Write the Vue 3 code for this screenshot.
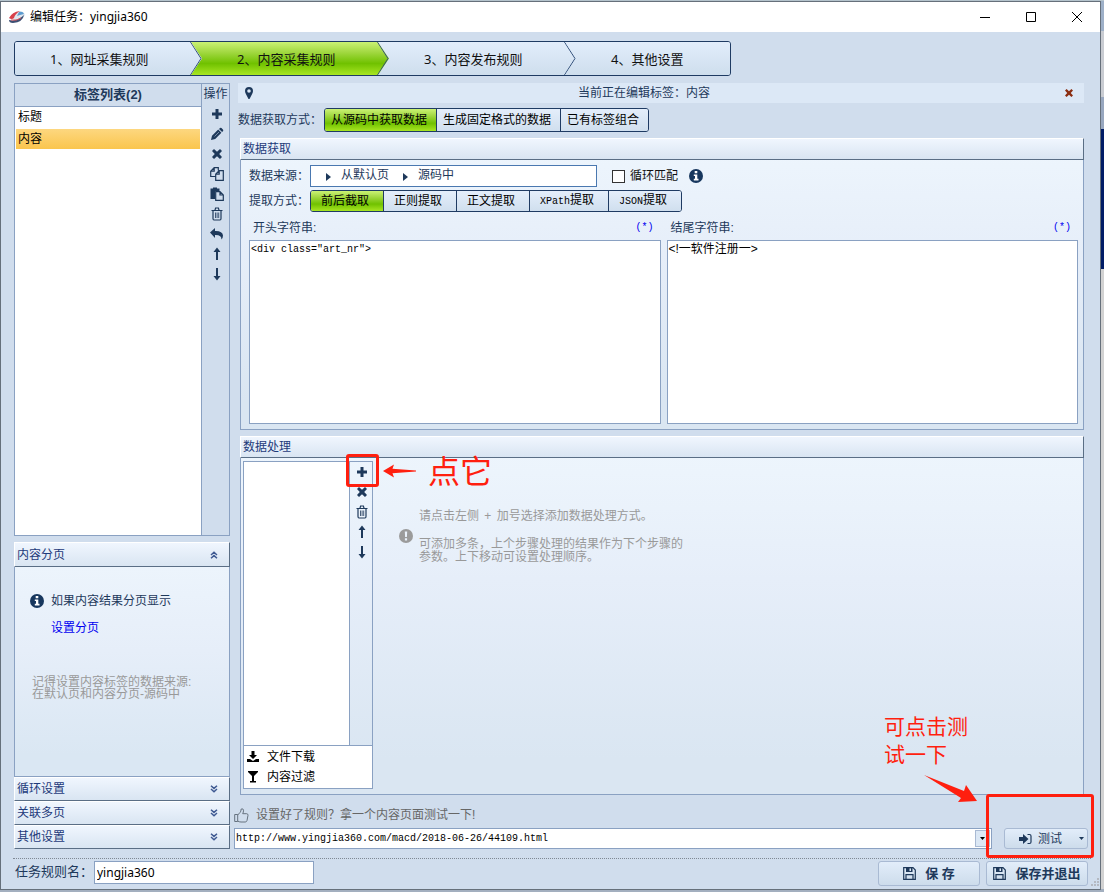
<script setup>
import { ref } from 'vue'

const steps = ['1、网址采集规则', '2、内容采集规则', '3、内容发布规则', '4、其他设置']
const activeStep = ref(1)
const tags = ['标题', '内容']
const activeTag = ref(1)
const sources = ['从源码中获取数据', '生成固定格式的数据', '已有标签组合']
const activeSource = ref(0)
const methods = [
  { latin: '', text: '前后截取' },
  { latin: '', text: '正则提取' },
  { latin: '', text: '正文提取' },
  { latin: 'XPath', text: '提取' },
  { latin: 'JSON', text: '提取' },
]
const activeMethod = ref(0)
const sections = ['循环设置', '关联多页', '其他设置']

const icons = {
  plus: { fill: 'M5.5 2h3v3.5H12v3H8.5V12h-3V8.5H2v-3h3.5z' },
  pencil: { fill: 'M1 13l1-4.200L8.200 2.600l3.200 3.200L5.200 12zM9 1.900l1-1q.8-.5 1.500.2l1.400 1.400q.7.8.2 1.500l-1 1z', line: 'M4.500 9.500l4.500-4.500' },
  close: { fill: 'M2 4l2-2 3 2.8L10 2l2 2-2.8 3L12 10l-2 2-3-2.8L4 12l-2-2 2.800-3z' },
  copy: { stroke: 'M5.500 9.500H.7V4.200L4.200.7h4.100v2.800M4.200.7v3.500H.7M5.700 7.200L9.200 3.700h4.100v9.600H5.700zM9.200 3.700v3.500H5.700' },
  paste: { fill: 'M.5 1.500H3V.5h4v1h2.500v2.500H5V12H.5z', stroke: 'M5.700 4.700H10l3.300 3.300v5.300H5.700zM10 4.700V8h3.300' },
  trash: { stroke: 'M1.500 3.500h11M5 3.200L5.600 1h2.800L9 3.200M3 3.500v8q0 1.500 1 1.500h6q1 0 1-1.500v-8', thin: 'M5.500 5.500v5.500M7.100 5.500v5.500M8.700 5.500v5.500' },
  undo: { fill: 'M0 5.500L5 1v3q7.500-.3 8 4.500 0 2.500-1.600 4 .4-4.800-6.400-4.500v3z' },
  up: { fill: 'M7 .5l3.500 4.500H8v8H6V5H3.500z' },
  down: { fill: 'M7 13.500L3.500 9H6V1h2v8h2.500z' },
}
const tagTools = [
  ['plus', '添加'], ['pencil', '编辑'], ['close', '删除'], ['copy', '复制'], ['paste', '粘贴'],
  ['trash', '清空'], ['undo', '撤销'], ['up', '上移'], ['down', '下移'],
]
const stepTools = [['plus', '添加'], ['close', '删除'], ['trash', '清空'], ['up', '上移'], ['down', '下移']]

const loop = ref(false)
const startText = ref('<div class="art_nr">')
const endText = ref('<!一软件注册一>')
const url = ref('http://www.yingjia360.com/macd/2018-06-26/44109.html')
const taskName = ref('yingjia360')
</script>

<template>
  <div class="desktop">
    <div class="window">
      <header class="titlebar">
        <svg class="logo" width="18" height="14" viewBox="0 0 18 14">
          <path d="M1 9Q4 3 11 1q5 0 6 4-2 4-8 5z" fill="#dfe6ee" />
          <path d="M1 8Q4 2 12 1 7 4 6 8q-2 2-5 0z" fill="#d8404a" />
          <path d="M11 2q4-1 5 2l-4 1-3 1z" fill="#5b9bd0" />
          <path d="M1 10q8 2 15-5-1 7-11 8-4 0-4-3z" fill="#3d4f73" />
          <path d="M3 10q6 1 10-2" stroke="#e2525a" fill="none" />
        </svg>
        <h1>编辑任务：yingjia360</h1>
        <div class="win-controls">
          <button aria-label="最小化"><svg width="12" height="12"><path d="M1 6.500h10" /></svg></button>
          <button aria-label="最大化"><svg width="12" height="12"><path d="M1.500 1.500h9v9h-9z" /></svg></button>
          <button aria-label="关闭"><svg width="12" height="12"><path d="M1 1l10 10M11 1L1 11" /></svg></button>
        </div>
      </header>

      <nav class="steps">
        <button v-for="(s, i) in steps" :key="s" class="step" :class="{ on: i === activeStep }" @click="activeStep = i">
          {{ s }}
          <svg v-if="i < 3" class="chevron" width="12" height="33" viewBox="0 0 12 33"><path d="M.5 0L11 16.500 .5 33" /></svg>
        </button>
      </nav>

      <div class="body">
        <aside class="side">
          <section class="tag-panel">
            <div class="tag-list">
              <h2>标签列表(2)</h2>
              <ul>
                <li v-for="(t, i) in tags" :key="t">
                  <button :class="{ on: i === activeTag }" @click="activeTag = i">{{ t }}</button>
                </li>
              </ul>
            </div>
            <div class="tools">
              <span>操作</span>
              <button v-for="[name, label] in tagTools" :key="name" :aria-label="label">
                <svg width="14" height="14" viewBox="0 0 14 14">
                  <path v-if="icons[name].fill" :d="icons[name].fill" class="f" />
                  <path v-if="icons[name].stroke" :d="icons[name].stroke" class="s" />
                  <path v-if="icons[name].thin" :d="icons[name].thin" class="t" />
                  <path v-if="icons[name].line" :d="icons[name].line" class="l" />
                </svg>
              </button>
            </div>
          </section>

          <section class="paging">
            <button class="head">内容分页
              <svg width="8" height="8" viewBox="0 0 8 8"><path d="M1 4L4 1.300 7 4M1 7.300L4 4.600l3 2.700" /></svg>
            </button>
            <div class="paging-body">
              <p class="info-line">
                <svg class="info" width="14" height="14" viewBox="0 0 14 14"><circle cx="7" cy="7" r="7" /><path d="M5.700 2h2.600v2.200H5.700zM4.800 5.500h3.500v4.300h1.200v1.700H4.800V9.800H6V7H4.800z" /></svg>
                如果内容结果分页显示
              </p>
              <a href="#">设置分页</a>
              <p class="note">记得设置内容标签的数据来源:<br>在默认页和内容分页-源码中</p>
            </div>
          </section>
          <button v-for="s in sections" :key="s" class="head small">{{ s }}
            <svg width="8" height="8" viewBox="0 0 8 8"><path d="M1 .700l3 2.700L7 .700M1 4l3 2.700L7 4" /></svg>
          </button>
        </aside>

        <main class="main">
          <div class="editing">
            <svg width="8" height="12" viewBox="0 0 8 12"><path fill-rule="evenodd" d="M4 0q4 .2 4 4 0 1.500-1 3.200L4.500 12h-1L1 7.200Q0 5.500 0 4 0 .2 4 0zM4 2.200a1.800 1.800 0 100 3.600 1.800 1.800 0 000-3.600z" fill="#1e395b" /></svg>
            <span>当前正在编辑标签：内容</span>
            <button aria-label="关闭编辑"><svg width="8" height="8" viewBox="2 2 10 10"><path :d="icons.close.fill" fill="#8b2e12" /></svg></button>
          </div>

          <div class="source-row">
            <span>数据获取方式：</span>
            <div class="seg">
              <button v-for="(s, i) in sources" :key="s" :class="{ on: i === activeSource }" @click="activeSource = i">{{ s }}</button>
            </div>
          </div>

          <section class="group">
            <h3>数据获取</h3>
            <div class="acquire">
              <div class="row">
                <span>数据来源：</span>
                <div class="crumbs">
                  <svg width="5" height="8"><path d="M0 0l5 4-5 4z" /></svg><span>从默认页</span>
                  <svg width="5" height="8"><path d="M0 0l5 4-5 4z" /></svg><span>源码中</span>
                </div>
                <label class="check"><input v-model="loop" type="checkbox">循环匹配</label>
                <svg class="info" width="14" height="14" viewBox="0 0 14 14"><circle cx="7" cy="7" r="7" /><path d="M5.700 2h2.600v2.200H5.700zM4.800 5.500h3.500v4.300h1.200v1.700H4.800V9.800H6V7H4.800z" /></svg>
              </div>
              <div class="row method-row">
                <span>提取方式：</span>
                <div class="seg methods">
                  <button v-for="(m, i) in methods" :key="i" :class="{ on: i === activeMethod }" @click="activeMethod = i"><span v-if="m.latin" class="latin">{{ m.latin }}</span>{{ m.text }}</button>
                </div>
              </div>
              <div class="strings">
                <div class="string">
                  <div class="string-label"><label for="start">开头字符串:</label><a href="#" class="latin">(*)</a></div>
                  <textarea id="start" v-model="startText" class="code" spellcheck="false"></textarea>
                </div>
                <div class="string">
                  <div class="string-label"><label for="end">结尾字符串:</label><a href="#" class="latin">(*)</a></div>
                  <textarea id="end" v-model="endText" spellcheck="false"></textarea>
                </div>
              </div>
            </div>
          </section>

          <section class="group process">
            <h3>数据处理</h3>
            <div class="process-body">
              <div class="pipeline">
                <div class="pipeline-top">
                  <div class="pipeline-list"></div>
                  <div class="tools">
                    <button v-for="[name, label] in stepTools" :key="name" :aria-label="label">
                      <svg width="14" height="14" viewBox="0 0 14 14">
                        <path v-if="icons[name].fill" :d="icons[name].fill" class="f" />
                        <path v-if="icons[name].stroke" :d="icons[name].stroke" class="s" />
                        <path v-if="icons[name].thin" :d="icons[name].thin" class="t" />
                      </svg>
                    </button>
                    <div class="mark-add">
                      <svg width="34" height="14" viewBox="0 0 34 14"><path d="M0 7L11 .5 9.500 4.800 33 6.500v1L9.500 9.300 11 13.500z" /></svg>
                      <span>点它</span>
                    </div>
                  </div>
                </div>
                <div class="kinds">
                  <button><svg width="12" height="12" viewBox="0 0 12 12"><path d="M4.500 0h3v4H10L6 8 2 4h2.500zM0 8h3l3 2 3-2h3v3H0z" /></svg>文件下载</button>
                  <button><svg width="12" height="12" viewBox="0 0 12 12"><path d="M1 0h10v1L7 5v5h2v1.500H3V10h2V5L1 1z" /></svg>内容过滤</button>
                </div>
              </div>
              <div class="hint">
                <svg width="14" height="14" viewBox="0 0 14 14"><circle cx="7" cy="7" r="7" fill="#9b9b9b" /><path d="M5.800 2.500h2.400L7.900 8H6.100zM5.900 9.300h2.200v2.200H5.900z" fill="#eaf2fb" /></svg>
                <div>
                  <p>请点击左侧 <span class="plus-sign">+</span> 加号选择添加数据处理方式。</p>
                  <p>可添加多条，上个步骤处理的结果作为下个步骤的<br>参数。上下移动可设置处理顺序。</p>
                </div>
              </div>
            </div>
          </section>

          <label class="try" for="url">
            <svg width="15" height="15" viewBox="0 0 15 15"><path d="M.7 6.500h3v7h-3zM3.700 7L6 4.500Q7 3.500 7.200 1q2-.8 2.300 1.200Q9.600 4 8.700 5.700h4q1.600.3 1.300 1.600l-1 5.200q-.5 1.500-1.700 1.500H7q-2 0-3.300-1" /></svg>
            设置好了规则？拿一个内容页面测试一下!
          </label>
          <div class="test-row">
            <div class="combo">
              <input id="url" v-model="url" class="code" spellcheck="false">
              <button aria-label="展开"><svg width="5" height="3"><path d="M0 0h5L2.500 3z" /></svg></button>
            </div>
            <div class="test">
              <button class="soft">
                <svg width="13" height="12" viewBox="0 0 13 12"><path d="M0 4h4V1l5.500 5L4 11V8H0z" class="f" /><path d="M8.500 1.500h2q1.500 0 1.500 1.500v6q0 1.500-1.500 1.500h-2" class="s" /></svg>
                <span>测试</span>
                <svg class="caret" width="5" height="3"><path d="M0 0h5L2.500 3z" class="f" /></svg>
              </button>
              <div class="mark-test"></div>
              <div class="mark-tip">可点击测<br>试一下</div>
              <svg class="mark-arrow" width="55" height="28" viewBox="0 0 55 28"><path d="M1 0L41 16 43 10 54 26 35 27 38 23Z" /></svg>
            </div>
          </div>
        </main>
      </div>

      <footer class="footer">
        <label for="task">任务规则名：</label>
        <input id="task" v-model="taskName" spellcheck="false">
        <div class="actions">
          <button v-for="t in ['保 存', '保存并退出']" :key="t" class="soft save">
            <svg width="13" height="13" viewBox="0 0 13 13"><path d="M.7.700h9.300l2.300 2.300v9.300H.7zM3 12V7.700h7V12" class="s" /><path d="M3 .5h6.500V5H3zM6.500 1.300v2.800H8V1.300z" fill-rule="evenodd" class="f" /></svg>
            {{ t }}
          </button>
        </div>
        <svg class="grip" width="8" height="8"><path d="M6 0h2v2H6zM3 3h2v2H3zM6 3h2v2H6zM0 6h2v2H0zM3 6h2v2H3zM6 6h2v2H6z" /></svg>
      </footer>
    </div>
  </div>
</template>

<style>
body { background: #9eabbc; }
</style>

<style scoped>
* { box-sizing: border-box; margin: 0; padding: 0; }
.desktop {
  min-height: 100vh;
  display: flex;
  padding: 1px 3px 2px 0;
  font: 12px/16px "Liberation Sans", "Noto Sans CJK SC", sans-serif;
  color: #1e395b;
  background: linear-gradient(#b4c3cc 0 1px, #9eb0c8 1px 31px, #c9ccd2 31px 97px, #98a7bf 97px 129px, #001c66 129px 269px, #d2d2d2 269px 889px, #a3afbf 889px);
}
button, input, textarea { font: inherit; color: inherit; }
button { background: none; border: 0; cursor: pointer; }
h1, h2, h3 { font-size: 12px; font-weight: normal; }
ul { list-style: none; }
a { color: #0000f0; text-decoration: none; }
svg { flex: none; }
.f { fill: #1e395b; }
.s { fill: none; stroke: #1e395b; stroke-width: 1.2; }
.t { fill: none; stroke: #1e395b; stroke-width: .8; }
.l { fill: none; stroke: #9fb0c8; stroke-width: .7; }
.latin, .code { font-family: "Liberation Mono", monospace; font-size: 10px; }
.window {
  position: relative;
  flex: 1;
  min-width: 0;
  display: flex;
  flex-direction: column;
  border: 1px solid #66707b;
  background: #d0dded;
}
.titlebar { height: 30px; flex: none; display: flex; align-items: center; background: #fff; padding-left: 7px; gap: 4px; }
.titlebar h1 { flex: 1; font-family: "Noto Sans", "Noto Sans CJK SC", sans-serif; color: #000; }
.win-controls { display: flex; }
.win-controls button { width: 46px; height: 28px; display: grid; place-items: center; }
.win-controls path { fill: none; stroke: #000; }

.steps {
  display: flex;
  align-self: flex-start;
  height: 35px;
  margin: 9px 0 7px 13px;
  border: 1px solid #1f3b63;
  border-radius: 3px;
  overflow: hidden;
}
.step {
  position: relative;
  width: 198px;
  margin-left: -11px;
  padding-left: 46px;
  text-align: left;
  font: 13px/32px "Noto Sans", "Noto Sans CJK SC", sans-serif;
  color: #111;
  background: linear-gradient(#e2edfb, #cedeed);
  clip-path: polygon(0 0, calc(100% - 11px) 0, 100% 50%, calc(100% - 11px) 100%, 0 100%);
}
.step:nth-child(1) { z-index: 4; width: 187px; margin-left: 0; padding-left: 35px; }
.step:nth-child(2) { z-index: 3; }
.step:nth-child(3) { z-index: 2; }
.step:nth-child(4) { z-index: 1; width: 165px; clip-path: none; }
.chevron { position: absolute; right: 0; top: 0; fill: none; stroke: #33507a; }
.on.step, .seg .on { background: linear-gradient(#cbf274, #a3d943 30%, #70c100 65%, #a8e622); }

.body { flex: 1; display: grid; grid-template-columns: 216px minmax(0, 1fr); gap: 4px; padding: 0 12px 0 13px; }
.side { display: flex; flex-direction: column; }
.tag-panel { flex: 1; display: flex; border: 1px solid #8aa1c2; margin-bottom: 6px; }
.tag-list { flex: 1; display: flex; flex-direction: column; border-right: 1px solid #8aa1c2; }
.tag-list h2 { height: 23px; border-bottom: 1px solid #8aa1c2; font-size: 13px; font-weight: bold; line-height: 21px; text-align: center; }
.tag-list ul { flex: 1; background: #fff; padding: 0 1px; }
.tag-list li { height: 21px; padding-bottom: 1px; }
.tag-list li:nth-child(2) { padding: 1px 0 0; }
.tag-list li button { width: 100%; height: 20px; padding-left: 2px; text-align: left; color: #000; line-height: 20px; }
.tag-list li .on { background: linear-gradient(#fdd77f, #fac54d); line-height: 18px; }
.tools { width: 27px; display: flex; flex-direction: column; align-items: center; position: relative; }
.tools > span { height: 20px; line-height: 21px; white-space: nowrap; }
.tools button { width: 22px; height: 20px; display: grid; place-items: center; padding-left: 3px; }

.head {
  flex: none;
  width: 100%;
  height: 25px;
  display: flex;
  align-items: center;
  justify-content: space-between;
  padding: 0 11px 0 2px;
  color: #1e3a7a;
  border: 1px solid #5a6e85;
  border-top-color: #fff;
  border-left-color: #fff;
  background: linear-gradient(#f0f6fe, #d9e5f2);
}
.head.small { height: 24px; }
.head path { fill: none; stroke: #3f5a92; stroke-width: 1.5; }
.paging-body {
  height: 210px;
  padding: 26px 15px 0;
  border: 1px solid #8aa1c2;
  border-top: 0;
  background: linear-gradient(#ecf4fc, #e6eef9 40%, #dae7f3 90%);
}
.info-line { display: flex; align-items: center; gap: 7px; }
.info circle { fill: #17375e; }
.info path { fill: #fff; }
.paging-body a { display: block; margin: 11px 0 40px 21px; }
.note { color: #999; line-height: 12px; padding-left: 2px; white-space: nowrap; }

.main { display: flex; flex-direction: column; min-width: 0; }
.editing { height: 20px; display: flex; align-items: center; margin: 0 4px; padding: 0 9px 0 7px; background: #dce8f6; }
.editing span { flex: 1; text-align: center; padding-right: 28px; }
.editing button { width: 12px; height: 12px; display: grid; place-items: center; }
.source-row { display: flex; align-items: center; margin: 5px 4px 6px; }
.source-row > span { width: 86px; }
.seg { display: flex; border: 1px solid #1f3b63; border-radius: 3px; overflow: hidden; }
.seg button { height: 22px; padding: 0 9px 0 6px; line-height: 20px; color: #000; background: linear-gradient(#e4eefb, #d0dfee); white-space: nowrap; text-align: left; }
.seg button + button { border-left: 1px solid #1f3b63; }
.seg.methods button { height: 20px; padding: 0 14px 0 10px; line-height: 18px; }

.group { margin: 0 4px 6px 6px; border: 1px solid #8aa1c2; border-top: 0; background: linear-gradient(#eef6fd, #e6eef9 40%, #dae6f2 90%); }
.group h3 {
  height: 22px;
  margin: 0 -1px;
  padding-left: 2px;
  line-height: 20px;
  color: #1e3a7a;
  border: 1px solid #5a6e85;
  border-top-color: #fff;
  border-left-color: #fff;
  background: linear-gradient(#f0f6fe, #d9e5f2);
}
.acquire { padding: 5px 5px 5px 8px; }
.row { display: flex; align-items: center; height: 22px; }
.row > span { width: 61px; }
.method-row { margin-top: 3px; }
.crumbs { width: 287px; height: 22px; display: flex; align-items: center; padding: 0 0 2px 15px; border: 1px solid #4a78b0; background: #fff; }
.crumbs span { margin: 0 14px 0 10px; }
.crumbs svg { fill: #1e395b; position: relative; top: 2px; }
.check { display: flex; align-items: center; gap: 5px; margin: 0 11px 0 15px; color: #111; }
.check input { appearance: none; width: 13px; height: 13px; border: 1px solid #333; background: #fff; }
.check input:checked { background: #1e395b; box-shadow: inset 0 0 0 2px #fff; }
.strings { display: grid; grid-template-columns: 1fr 1fr; gap: 6px; margin-top: 8px; }
.string-label { display: flex; justify-content: space-between; height: 20px; padding: 0 7px 0 4px; }
.string textarea { display: block; width: 100%; height: 184px; padding: 0 1px; resize: none; border: 1px solid #8aa1c2; border-radius: 0; outline: 0; background: #fff; color: #000; line-height: 17px; }

.process { flex: 1; display: flex; flex-direction: column; margin-bottom: 12px; }
.process-body { flex: 1; display: flex; padding: 3px 2px 5px; }
.pipeline { width: 130px; display: flex; flex-direction: column; border: 1px solid #8aa1c2; }
.pipeline-top { flex: 1; display: flex; }
.pipeline-list { flex: 1; background: #fff; border-right: 1px solid #8aa1c2; }
.pipeline .tools { width: 22px; }
.pipeline .tools button { padding-left: 2px; }
.kinds { background: #fff; border-top: 1px solid #8aa1c2; padding: 1px 0; }
.kinds button { display: flex; align-items: center; gap: 8px; width: 100%; height: 20px; padding-left: 3px; color: #000; }
.hint { display: flex; padding: 49px 0 0 26px; gap: 6px; color: #999; line-height: 13px; }
.hint svg { margin-top: 19px; }
.hint p + p { margin-top: 15px; }
.plus-sign { padding: 0 2px; }

.try { display: flex; align-items: center; gap: 7px; height: 16px; margin-bottom: 5px; color: #666; }
.try path { fill: none; stroke: #66727f; }
.test-row { display: flex; gap: 12px; }
.combo { flex: 1; height: 21px; display: flex; padding: 1px; border: 1px solid #8aa1c2; background: #fff; }
.combo input { flex: 1; min-width: 0; border: 0; outline: 0; background: none; color: #000; }
.combo button { width: 15px; display: grid; place-items: center; border: 1px solid #a9bad3; background: #dce8f5; }
.test { position: relative; width: 84px; }
.soft { display: flex; align-items: center; border: 1px solid #a9bad3; border-radius: 3px; background: linear-gradient(#e2edfa, #cddceb); }
.test .soft { width: 100%; height: 21px; padding: 0 3px 0 14px; }
.test .soft span { flex: 1; text-align: left; padding-left: 6px; }

.footer { position: relative; display: flex; height: 31px; margin: 9px 9px 0 12px; padding: 2px 3px 0 2px; border-top: 1px dotted #7f8894; }
.footer label { width: 79px; font-size: 13px; line-height: 22px; white-space: nowrap; }
.footer input { width: 220px; height: 23px; padding: 0 2px; border: 1px solid #8aa1c2; outline: 0; background: #fff; color: #000; font-family: "Noto Sans", sans-serif; }
.actions { display: flex; gap: 6px; margin-left: auto; }
.save { width: 102px; height: 25px; justify-content: center; gap: 9px; font-size: 13px; font-weight: bold; white-space: nowrap; }
.grip { position: absolute; right: -8px; bottom: 3px; fill: #b4b9c2; }

/* Red tutorial marks laid over the window */
.mark-add { position: absolute; left: -4px; top: -8px; width: 33px; height: 33px; border: 3px solid #ff1f0f; border-radius: 3px; pointer-events: none; }
.mark-add svg { position: absolute; left: 34px; top: 7px; fill: #ff1f0f; }
.mark-add span { position: absolute; left: 79px; top: -5px; font-size: 32px; line-height: 40px; color: #ff1f0f; white-space: nowrap; }
.mark-test { position: absolute; left: -18px; top: -34px; width: 108px; height: 64px; border: 3px solid #ff1f0f; border-radius: 3px; pointer-events: none; }
.mark-tip { position: absolute; left: -120px; top: -115px; font-size: 21px; line-height: 28px; color: #ff1f0f; white-space: nowrap; }
.mark-arrow { position: absolute; left: -81px; top: -53px; fill: #ff1f0f; }
</style>
